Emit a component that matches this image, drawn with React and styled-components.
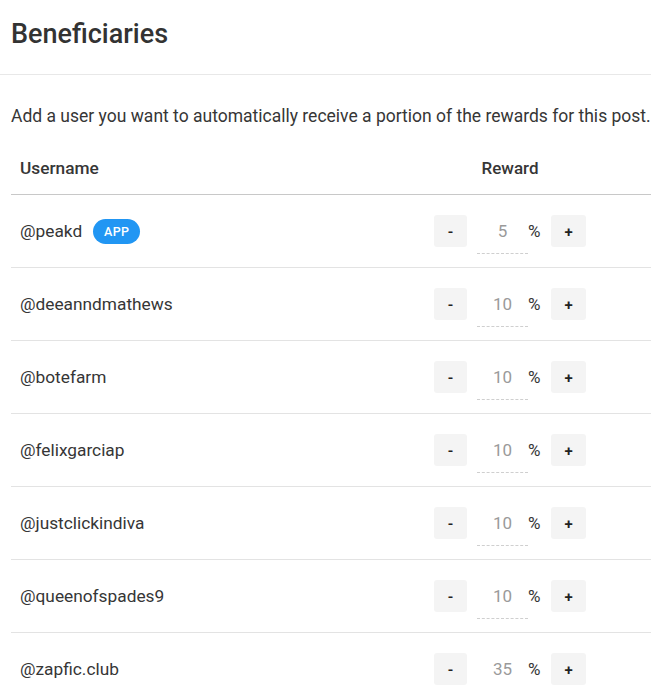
import React from 'react';
import styled, { createGlobalStyle } from 'styled-components';

// --- Datos ---
const beneficiaries = [
  { user: 'peakd', weight: 5, app: true },
  { user: 'deeanndmathews', weight: 10 },
  { user: 'botefarm', weight: 10 },
  { user: 'felixgarciap', weight: 10 },
  { user: 'justclickindiva', weight: 10 },
  { user: 'queenofspades9', weight: 10 },
  { user: 'zapfic.club', weight: 35 },
];

// --- Styled Components ---

const GlobalStyle = createGlobalStyle`
  body {
    margin: 0;
    background: #ffffff;
    font-family: Roboto, "Liberation Sans", sans-serif;
    color: #363636;
  }
`;

const Header = styled.header`
  padding: 16px 11px 0;
  height: 58px;
  border-bottom: 1px solid #e8e8e8;
`;

const Title = styled.h1`
  margin: 0;
  font-size: 27px;
  font-weight: 500;
  color: #333;
  line-height: 36px;
`;

const Body = styled.section`
  padding: 29px 0 0 11px;
`;

const Description = styled.p`
  margin: 0 0 17px;
  font-size: 17.5px;
  line-height: 25px;
  color: #363636;
`;

const Table = styled.div`
  display: flex;
  flex-direction: column;
`;

const Row = styled.div`
  display: flex;
  align-items: center;
  box-sizing: border-box;
  height: ${(p) => (p.$head ? '49px' : '73px')};
  padding-bottom: ${(p) => (p.$head ? '4px' : '0')};
  border-bottom: 1px solid ${(p) => (p.$head ? '#c8c8c8' : '#e3e3e3')};
`;

const UserCell = styled.div`
  flex: 1;
  display: flex;
  align-items: center;
  gap: 11px;
  padding-left: 9px;
  font-size: 17.3px;
  font-weight: ${(p) => (p.$head ? 500 : 400)};
  color: #363636;
`;

const RewardCell = styled.div`
  width: 282px;
  display: flex;
  align-items: center;
  justify-content: center;
  font-size: 17px;
  font-weight: ${(p) => (p.$head ? 500 : 400)};
  color: #363636;
`;

const Badge = styled.span`
  display: inline-flex;
  align-items: center;
  justify-content: center;
  height: 25px;
  width: 47px;
  border-radius: 13px;
  background: #2196f3;
  color: #fff;
  font-size: 12.5px;
  font-weight: 500;
  letter-spacing: 0.3px;
`;

const StepButton = styled.button`
  width: ${(p) => (p.$plus ? '35px' : '33px')};
  height: 32px;
  border: none;
  border-radius: 3px;
  background: #f4f4f4;
  color: #222;
  font-family: Roboto, "Liberation Sans", sans-serif;
  font-size: 15px;
  font-weight: 600;
  padding: 2px 0 0;
  cursor: pointer;
`;

const Amount = styled.input`
  width: 51px;
  height: 46px;
  box-sizing: border-box;
  margin-left: 10px;
  border: none;
  border-bottom: 1px dashed #cfcfcf;
  background: transparent;
  text-align: center;
  font-family: Roboto, "Liberation Sans", sans-serif;
  font-size: 17px;
  color: #9a9a9a;
  padding: 0;
  outline: none;
`;

const Percent = styled.span`
  width: 23px;
  font-size: 17px;
  color: #363636;
  text-align: left;
`;

// --- El Componente ---

function App() {
  return (
    <>
      <GlobalStyle />
      <Header>
        <Title>Beneficiaries</Title>
      </Header>
      <Body>
        <Description>
          Add a user you want to automatically receive a portion of the rewards for this post.
        </Description>
        <Table>
          <Row $head>
            <UserCell $head>Username</UserCell>
            <RewardCell $head>Reward</RewardCell>
          </Row>
          {beneficiaries.map((b) => (
            <Row key={b.user}>
              <UserCell>
                @{b.user}
                {b.app && <Badge>APP</Badge>}
              </UserCell>
              <RewardCell>
                <StepButton>-</StepButton>
                <Amount defaultValue={b.weight} />
                <Percent>%</Percent>
                <StepButton $plus>+</StepButton>
              </RewardCell>
            </Row>
          ))}
        </Table>
      </Body>
    </>
  );
}

export default App;
